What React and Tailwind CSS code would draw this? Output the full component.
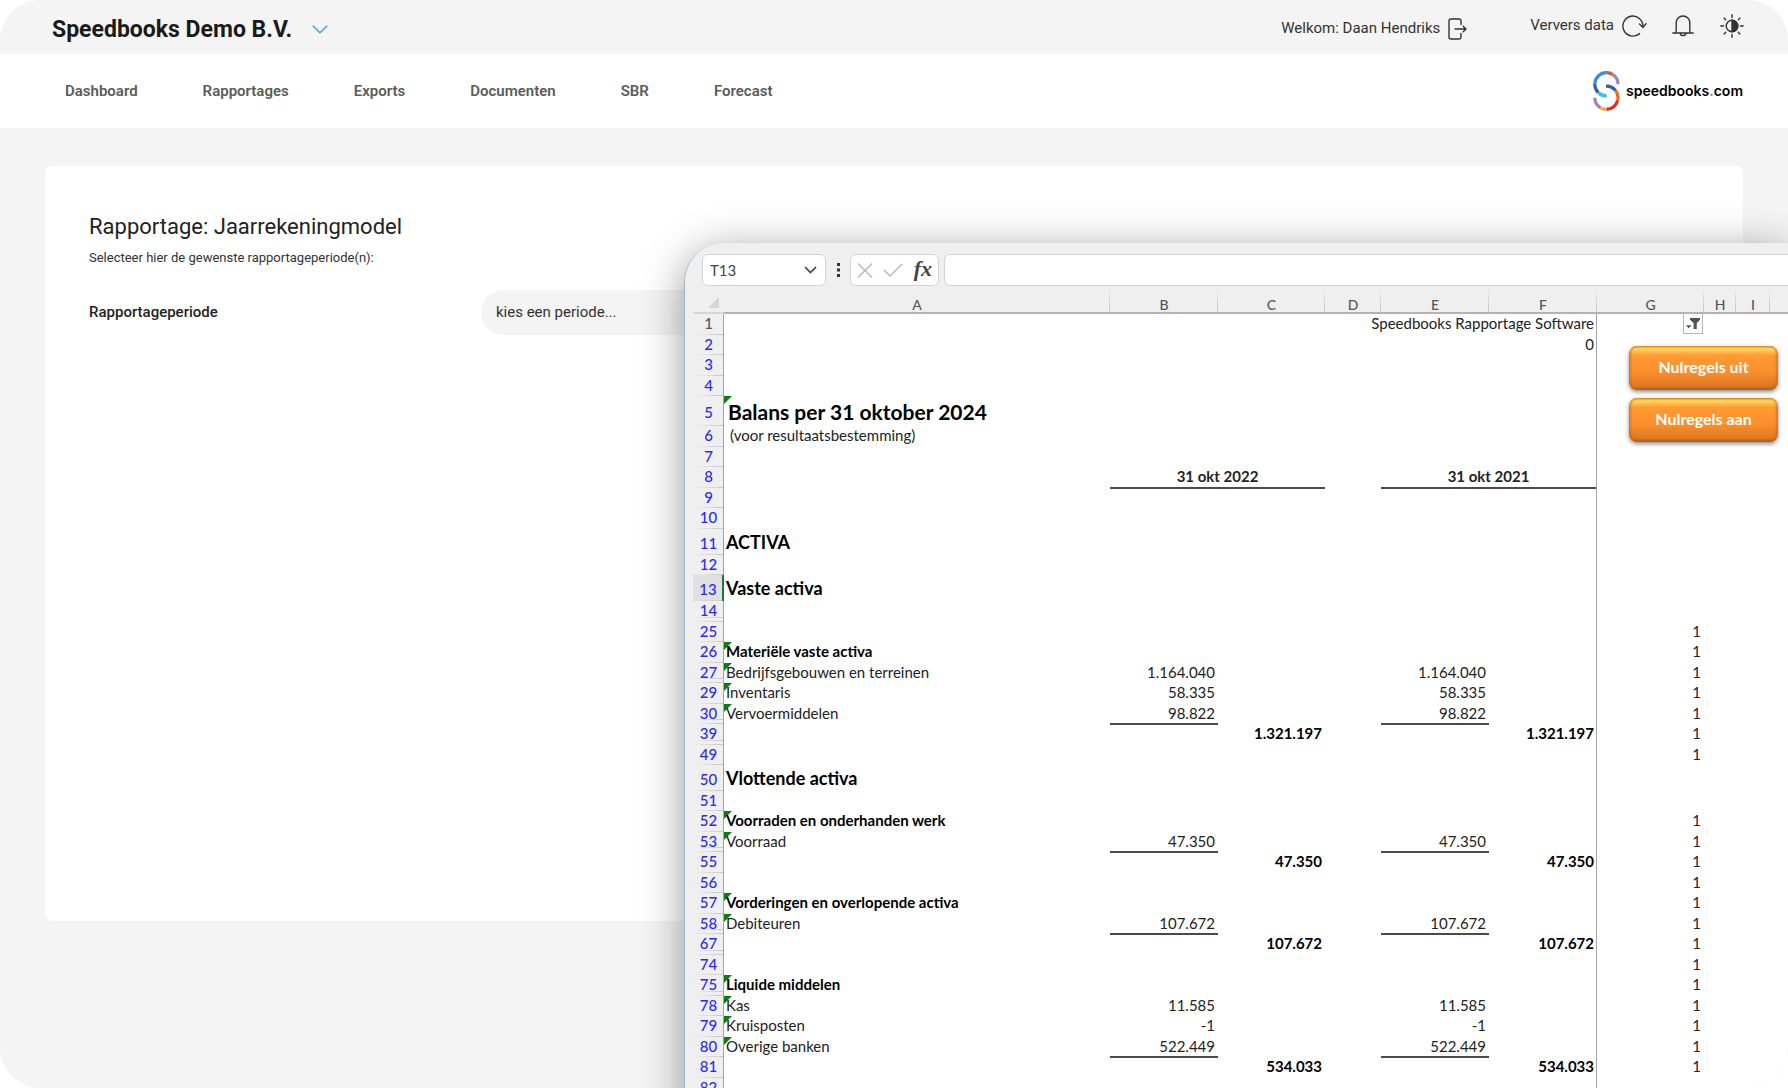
import React from "react";

const NAV = ["Dashboard", "Rapportages", "Exports", "Documenten", "SBR", "Forecast"];

const COLUMNS = [
  ["A", "w-[386px]"],
  ["B", "w-[108px]"],
  ["C", "w-[107px]"],
  ["D", "w-[56px]"],
  ["E", "w-[108px]"],
  ["F", "w-[108px]"],
  ["G", "w-[107px]"],
  ["H", "w-[32px]"],
  ["I", "w-[34px]"],
];

const H20 = "h-[20px]";
const H21 = "h-[21px]";
const H26 = "h-[26px]";
const H30 = "h-[30px]";

// hiddenBelow: rows after this one are collapsed; sub: B and E amounts; total: C and F amounts
const ROWS = [
  { n: 1, h: H21, right: "Speedbooks Rapportage Software", filter: true },
  { n: 2, h: H20, right: "0", buttons: true },
  { n: 3, h: H21 },
  { n: 4, h: H20 },
  { n: 5, h: H30, a: "Balans per 31 oktober 2024", kind: "title", mark: true },
  { n: 6, h: H21, a: "(voor resultaatsbestemming)", kind: "indent" },
  { n: 7, h: H20 },
  { n: 8, h: H21, periods: ["31 okt 2022", "31 okt 2021"] },
  { n: 9, h: H20 },
  { n: 10, h: H21 },
  { n: 11, h: H26, a: "ACTIVA", kind: "heading" },
  { n: 12, h: H20 },
  { n: 13, h: H26, a: "Vaste activa", kind: "heading", selected: true },
  { n: 14, h: H21, hiddenBelow: true },
  { n: 25, h: H20, g: "1" },
  { n: 26, h: H21, a: "Materiële vaste activa", kind: "bold", mark: true, g: "1" },
  { n: 27, h: H20, a: "Bedrijfsgebouwen en terreinen", mark: true, sub: "1.164.040", g: "1", hiddenBelow: true },
  { n: 29, h: H21, a: "Inventaris", mark: true, sub: "58.335", g: "1" },
  { n: 30, h: H20, a: "Vervoermiddelen", mark: true, sub: "98.822", line: true, g: "1", hiddenBelow: true },
  { n: 39, h: H21, total: "1.321.197", g: "1", hiddenBelow: true },
  { n: 49, h: H20, g: "1" },
  { n: 50, h: H26, a: "Vlottende activa", kind: "heading" },
  { n: 51, h: H20 },
  { n: 52, h: H21, a: "Voorraden en onderhanden werk", kind: "bold", mark: true, g: "1" },
  { n: 53, h: H20, a: "Voorraad", mark: true, sub: "47.350", line: true, g: "1", hiddenBelow: true },
  { n: 55, h: H21, total: "47.350", g: "1" },
  { n: 56, h: H20, g: "1" },
  { n: 57, h: H21, a: "Vorderingen en overlopende activa", kind: "bold", mark: true, g: "1" },
  { n: 58, h: H20, a: "Debiteuren", mark: true, sub: "107.672", line: true, g: "1", hiddenBelow: true },
  { n: 67, h: H21, total: "107.672", g: "1", hiddenBelow: true },
  { n: 74, h: H20, g: "1" },
  { n: 75, h: H21, a: "Liquide middelen", kind: "bold", mark: true, g: "1", hiddenBelow: true },
  { n: 78, h: H20, a: "Kas", mark: true, sub: "11.585", g: "1" },
  { n: 79, h: H21, a: "Kruisposten", mark: true, sub: "-1", g: "1" },
  { n: 80, h: H20, a: "Overige banken", mark: true, sub: "522.449", line: true, g: "1" },
  { n: 81, h: H21, total: "534.033", g: "1" },
  { n: 82, h: H20 },
];

const KIND = {
  title: "pl-1 align-middle text-[21px] font-bold text-black",
  heading: "pl-[2px] align-middle text-lg leading-5 font-bold text-black",
  bold: "pl-[2px] align-top font-bold text-black",
  indent: "pl-[6px] align-top",
};

function arc(cx, cy, r, from, to) {
  const p = (deg) => {
    const a = (deg * Math.PI) / 180;
    return `${(cx + r * Math.cos(a)).toFixed(2)} ${(cy + r * Math.sin(a)).toFixed(2)}`;
  };
  return `M${p(from)}A${r} ${r} 0 0 ${to > from ? 1 : 0} ${p(to)}`;
}

const LOGO_ARCS = [
  [13.3, 272, 302, "#e8542a"],
  [13.3, 302, 360, "#9b86c4"],
  [13.3, 272, 183, "#2f93d6"],
  [13.3, 183, 135, "#2c62b0"],
  [13.3, 135, 88, "#3fbfe8"],
  [26.7, 268, 322, "#2c62b0"],
  [26.7, 322, 375, "#ea6a1e"],
  [26.7, 375, 450, "#e52620"],
  [26.7, 450, 482, "#fbae2b"],
  [26.7, 482, 540, "#a87bb8"],
];

function Logo() {
  return (
    <a href="#" className="flex items-center gap-[6px] text-sm font-semibold text-black font-[Inter,sans-serif]">
      <svg width="27" height="40" viewBox="0 0 27 40" fill="none" strokeWidth="3.2" aria-hidden="true">
        {LOGO_ARCS.map(([cy, from, to, color]) => (
          <path key={cy + "-" + to} d={arc(13.4, cy, 11.6, from, to)} stroke={color} />
        ))}
      </svg>
      <span>
        speedbooks<span className="text-[#8a8a8a]">.</span>com
      </span>
    </a>
  );
}

const icon = { fill: "none", stroke: "#333", strokeWidth: 1.4, strokeLinecap: "round", strokeLinejoin: "round", "aria-hidden": true };

function LogoutIcon() {
  return (
    <svg width="20" height="22" viewBox="0 0 20 22" {...icon}>
      <path d="M13 6.500V2.700a1.700 1.700 0 0 0-1.700-1.700H2.700A1.700 1.700 0 0 0 1 2.700v16.600A1.700 1.700 0 0 0 2.700 21h8.600a1.700 1.700 0 0 0 1.700-1.700v-3.800" />
      <path d="M7 11h11M15.200 8.200 18 11l-2.800 2.800" />
    </svg>
  );
}

function RefreshIcon() {
  return (
    <svg width="25" height="22" viewBox="0 0 25 22" {...icon}>
      <path d="M17.500 18.600A10 10 0 1 1 20.900 11.500" />
      <path d="M17.500 9 21 12.400 24 8.800" />
    </svg>
  );
}

function BellIcon() {
  return (
    <svg width="22" height="22" viewBox="0 0 22 22" {...icon}>
      <path d="M.8 18h20.400M3.800 18c.4-1 .4-2.200.4-4V7.800C4.200 4 7.200 1 11 1s6.800 3 6.800 6.800V14c0 1.800 0 3 .4 4" />
      <path d="M8.200 18.300c.3 1.500 1.400 2.300 2.800 2.300s2.500-.8 2.800-2.300" />
    </svg>
  );
}

function ContrastIcon() {
  return (
    <svg width="24" height="24" viewBox="0 0 24 24" {...icon}>
      <circle cx="12" cy="12" r="5.800" />
      <path d="M12 6.200a5.800 5.800 0 0 1 0 11.600z" fill="#333" />
      <path d="M12 .8v2.700M12 20.500v2.700M.8 12h2.700M20.500 12h2.700M4.100 4.100l1.600 1.600M18.300 18.300l1.600 1.600M4.100 19.900l1.600-1.600M18.300 5.700l1.600-1.600" />
    </svg>
  );
}

function Header() {
  return (
    <header className="flex h-[54px] items-center justify-between bg-[#f4f4f4] pr-11 pl-[52px]">
      <button type="button" className="flex items-center gap-5 pt-[5px] text-[23px] leading-8 font-bold text-[#1a1a1a]">
        Speedbooks Demo B.V.
        <svg width="16" height="9" viewBox="0 0 16 9" fill="none" stroke="#3aa5de" strokeWidth="1.5" aria-hidden="true">
          <path d="M.8 .8 8 7.800 15.200 .8" />
        </svg>
      </button>
      <div className="flex items-center text-[15px] text-[#333]">
        <button type="button" className="mt-[3px] mr-[62px] flex items-center gap-2">
          Welkom: Daan Hendriks <LogoutIcon />
        </button>
        <button type="button" className="mr-[25px] flex items-center gap-2 pb-[3px]">
          Ververs data <RefreshIcon />
        </button>
        <button type="button" aria-label="Meldingen" className="mr-[26px] pb-[3px]">
          <BellIcon />
        </button>
        <button type="button" aria-label="Contrast" className="pb-[3px]">
          <ContrastIcon />
        </button>
      </div>
    </header>
  );
}

function SpreadsheetToolbar() {
  return (
    <div className="flex h-8 gap-[5px] pl-[17px] text-[#444]">
      <div className="flex w-[124px] items-center rounded-md border border-[#d4d4d4] bg-white pr-1 pl-[7px]">
        <input aria-label="Naamvak" defaultValue="T13" className="w-full min-w-0 outline-none" />
        <button type="button" aria-label="Kies cel" className="p-1">
          <svg width="13" height="8" viewBox="0 0 13 8" fill="none" stroke="#444" strokeWidth="1.700" aria-hidden="true">
            <path d="M1 1l5.500 5.500L12 1" />
          </svg>
        </button>
      </div>
      <div className="flex w-[14px] items-center justify-center">
        <svg width="3" height="14" viewBox="0 0 3 14" fill="#333" aria-hidden="true">
          <rect width="3" height="3" />
          <rect y="5.500" width="3" height="3" />
          <rect y="11" width="3" height="3" />
        </svg>
      </div>
      <div className="flex w-[89px] items-center justify-between rounded-md border border-[#d4d4d4] bg-white px-[6px]">
        <button type="button" aria-label="Annuleren">
          <svg width="16" height="15" viewBox="0 0 16 15" fill="none" stroke="#b9b9b9" strokeWidth="1.500" aria-hidden="true">
            <path d="M1 .5l14 14M15 .5l-14 14" />
          </svg>
        </button>
        <button type="button" aria-label="Invoeren">
          <svg width="20" height="14" viewBox="0 0 20 14" fill="none" stroke="#b9b9b9" strokeWidth="1.500" aria-hidden="true">
            <path d="M1 7l6 6L19 1" />
          </svg>
        </button>
        <button type="button" className="pb-[2px] text-[22px] leading-none font-bold italic font-['Liberation_Serif',serif]">
          fx
        </button>
      </div>
      <input
        aria-label="Formulebalk"
        className="min-w-0 flex-1 rounded-l-md border border-r-0 border-[#d4d4d4] bg-white px-2 outline-none"
      />
    </div>
  );
}

function Amount({ value, line }) {
  return (
    <td className="relative p-0 pr-[3px] text-right align-top">
      {value}
      {line && <span className="absolute inset-x-0 -bottom-px h-[2px] bg-[#4a4a4a]" />}
    </td>
  );
}

function Period({ value, edge }) {
  return (
    <td
      colSpan={2}
      className={"relative p-0 text-center align-top font-bold text-[#222]" + (edge ? " border-r border-[#a3a3a3]" : "")}
    >
      {value}
      <span className="absolute inset-x-0 -bottom-px h-[2px] bg-[#4a4a4a]" />
    </td>
  );
}

function MacroButton({ children }) {
  return (
    <button
      type="button"
      className="h-11 rounded-lg bg-[linear-gradient(#e89a2c_0%,#ffd964_7%,#ffb848_14%,#ff9a35_22%,#fb8f2d_60%,#dd7722_92%,#a85a1c_100%)] pb-[2px] text-base font-bold text-white shadow-[0_2px_4px_rgba(0,0,0,0.45),inset_2px_0_2px_rgba(190,95,15,0.5),inset_-2px_0_2px_rgba(190,95,15,0.5)]"
    >
      {children}
    </button>
  );
}

function Row({ row }) {
  const lines = row.hiddenBelow
    ? "bg-[linear-gradient(90deg,transparent,#c9c9c9),linear-gradient(90deg,transparent,#c9c9c9)] bg-[length:100%_1px,100%_1px] bg-[position:0_100%,0_calc(100%-4px)]"
    : "bg-[linear-gradient(90deg,transparent,#c9c9c9)] bg-[length:100%_1px] bg-[position:0_100%]";
  const edge = row.selected ? "border-r-2 border-[#217346] bg-[#e0e0e0]" : "border-r border-[#a3a3a3] bg-[#efefef]";
  const tall = row.h === H26 || row.h === H30;
  return (
    <tr className={row.h}>
      <th
        scope="row"
        className={
          "bg-no-repeat p-0 pl-px text-center text-[15px] font-medium " +
          (row.n === 1 ? "text-[#555] " : "text-[#2a2aff] ") +
          lines + " " + edge + (tall ? " pt-[2px] align-middle" : " align-top")
        }
      >
        {row.n}
      </th>
      <td className={"relative p-0 whitespace-nowrap " + (KIND[row.kind] || "pl-[2px] align-top")}>
        {row.mark && <span className="absolute top-0 left-0 size-2 bg-[#0d7d12] [clip-path:polygon(0_0,100%_0,0_100%)]" />}
        <span className="relative">{row.a}</span>
      </td>
      {row.periods ? (
        <Period value={row.periods[0]} />
      ) : (
        <>
          <Amount value={row.sub} line={row.line} />
          <td className="p-0 pr-[3px] text-right align-top font-bold text-black">{row.total}</td>
        </>
      )}
      {!row.right && <td className="p-0" />}
      {row.periods && <Period value={row.periods[1]} edge />}
      {row.right && (
        <td colSpan={3} className="border-r border-[#a3a3a3] p-0 pr-[2px] text-right align-top whitespace-nowrap">
          {row.right}
        </td>
      )}
      {!row.periods && !row.right && (
        <>
          <Amount value={row.sub} line={row.line} />
          <td className="border-r border-[#a3a3a3] p-0 pr-[2px] text-right align-top font-bold text-black">{row.total}</td>
        </>
      )}
      <td className="relative p-0 pr-[3px] text-right align-top">
        {row.g}
        {row.filter && (
          <button
            type="button"
            aria-label="Filter"
            className="absolute top-0 right-px flex h-5 w-5 items-center justify-center border border-t-0 border-[#b4b8c0] bg-[#fbfcfd]"
          >
            <svg width="14" height="12" viewBox="0 0 14 12" fill="#505050" aria-hidden="true">
              <path d="M4 0h10v1.800L10.800 5v6H7.600V5L4 1.800zM0 7.200h5.400L2.700 10.200z" />
            </svg>
          </button>
        )}
        {row.buttons && (
          <div className="absolute top-[11px] left-8 z-10 flex w-[149px] flex-col gap-2">
            <MacroButton>Nulregels uit</MacroButton>
            <MacroButton>Nulregels aan</MacroButton>
          </div>
        )}
      </td>
      <td colSpan={3} className="p-0" />
    </tr>
  );
}

function Spreadsheet() {
  return (
    <section
      aria-label="Balans"
      className="absolute top-[243px] right-0 -bottom-16 left-[684px] overflow-hidden rounded-tl-[40px] border-l border-[#9fb3c6] bg-white text-[15px] leading-[19px] text-[#222] shadow-[0_8px_44px_rgba(0,0,0,0.4)] font-[Lato,sans-serif]"
    >
      <div className="bg-[#efefef] pt-[11px]">
        <SpreadsheetToolbar />
        <div className="pl-2">
          <table className="w-full table-fixed border-separate border-spacing-0">
            <thead>
              <tr className="h-7 text-sm leading-[14px] text-[#555]">
                <th className="w-[31px] border-b-2 border-[#d8d8d8] p-0 align-bottom">
                  <svg width="11" height="11" viewBox="0 0 11 11" fill="#d6d6d6" aria-hidden="true" className="mb-1 ml-[15px]">
                    <path d="M11 0v11H0z" />
                  </svg>
                </th>
                {COLUMNS.map(([name, width]) => (
                  <th
                    key={name}
                    scope="col"
                    className={
                      "border-b-2 border-[#b3b3b3] bg-[linear-gradient(transparent,#c4c4c4)] bg-[length:1px_100%] bg-right bg-no-repeat p-0 align-bottom font-medium " +
                      width
                    }
                  >
                    {name}
                  </th>
                ))}
                <th className="border-b-2 border-[#b3b3b3] p-0" />
              </tr>
            </thead>
            <tbody className="bg-white">
              {ROWS.map((row) => (
                <Row key={row.n} row={row} />
              ))}
            </tbody>
          </table>
        </div>
      </div>
    </section>
  );
}

export default function App() {
  return (
    <div className="relative flex h-screen min-h-[700px] flex-col overflow-hidden rounded-[40px] bg-[#f4f4f4] text-[#222] font-[Roboto,sans-serif]">
      <Header />
      <nav className="flex h-[74px] items-center justify-between bg-white pr-[45px] pl-[65px]">
        <ul className="flex gap-[65px] text-[15px] font-semibold text-[#5c5c5c]">
          {NAV.map((item) => (
            <li key={item}>
              <a href="#">{item}</a>
            </li>
          ))}
        </ul>
        <Logo />
      </nav>
      <main className="flex flex-1 flex-col px-[45px] pt-[38px] pb-[167px]">
        <div className="flex-1 rounded-lg bg-white px-11 pt-[46px]">
          <h1 className="text-[22px] leading-[30px]">Rapportage: Jaarrekeningmodel</h1>
          <p className="mt-[6px] text-[13px] leading-5 text-[#333]">Selecteer hier de gewenste rapportageperiode(n):</p>
          <div className="mt-[22px] flex items-center text-[15px]">
            <label htmlFor="periode" className="w-[392px] font-medium">
              Rapportageperiode
            </label>
            <select id="periode" className="h-[45px] flex-1 appearance-none rounded-full bg-[#f4f4f4] px-[15px] text-[#333]">
              <option>kies een periode...</option>
            </select>
          </div>
        </div>
      </main>
      <Spreadsheet />
    </div>
  );
}
